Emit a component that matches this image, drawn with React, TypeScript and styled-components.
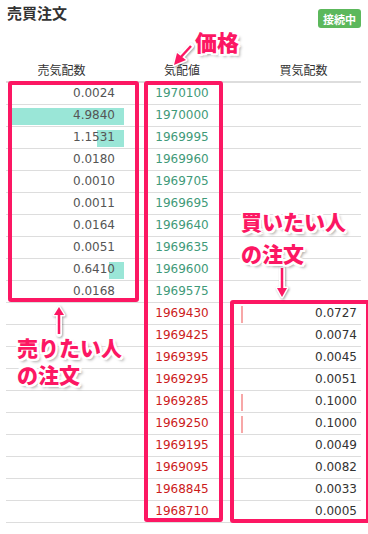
import React from "react";
import styled, { createGlobalStyle } from "styled-components";

const GlobalStyle = createGlobalStyle`
  html, body { margin: 0; padding: 0; background: #fff; }
  body { font-family: "DejaVu Sans", "Noto Sans CJK JP", sans-serif; }
  * { box-sizing: border-box; }
`;

const PINK = "#fc1763";

const Page = styled.div`
  position: relative;
  width: 368px;
  height: 534px;
  padding: 0 7px 0 6px;
  overflow: hidden;
`;

const TopBar = styled.div`
  display: flex;
  justify-content: space-between;
  align-items: flex-start;
  height: 26px;
`;

const Title = styled.h1`
  margin: 0;
  padding-left: 1px;
  font-family: "Noto Sans CJK JP", sans-serif;
  font-size: 15px;
  font-weight: 700;
  line-height: 26px;
  color: #333;
`;

const Badge = styled.span`
  margin-top: 9px;
  width: 43px;
  height: 19px;
  display: flex;
  align-items: center;
  justify-content: center;
  background: #5cb85c;
  color: #fff;
  border-radius: 3px;
  font-family: "Noto Sans CJK JP", sans-serif;
  font-size: 11px;
  font-weight: 700;
`;

const Grid = styled.div`
  display: grid;
  grid-template-columns: 122px 108px 125px;
`;

const HeadCell = styled.div<{ $pl?: number; $pr?: number }>`
  height: 57px;
  display: flex;
  align-items: flex-end;
  justify-content: center;
  padding: 0 ${(p) => p.$pr ?? 0}px 3px ${(p) => p.$pl ?? 0}px;
  border-bottom: 2px solid #ddd;
  font-family: "Noto Sans CJK JP", sans-serif;
  font-size: 12px;
  line-height: 16px;
  color: #333;
`;

const Cell = styled.div<{ $align: "left" | "center" | "right"; $color: string; $pr?: number }>`
  position: relative;
  height: 22px;
  border-bottom: 1px solid #ddd;
  display: flex;
  align-items: center;
  justify-content: ${(p) =>
    p.$align === "right" ? "flex-end" : p.$align === "center" ? "center" : "flex-start"};
  padding-right: ${(p) => p.$pr ?? 0}px;
  font-size: 12px;
  line-height: 21px;
  color: ${(p) => p.$color};
`;

const Value = styled.span`
  position: relative;
  z-index: 1;
`;

const SellBar = styled.div`
  position: absolute;
  right: 4px;
  top: 3px;
  height: 17px;
  background: #9ae6d7;
`;

const BuyBar = styled.div`
  position: absolute;
  left: 5px;
  top: 3px;
  height: 17px;
  width: 2px;
  background: #f7a7a7;
`;

const Frame = styled.div<{ $l: number; $t: number; $w: number; $h: number }>`
  position: absolute;
  left: ${(p) => p.$l}px;
  top: ${(p) => p.$t}px;
  width: ${(p) => p.$w}px;
  height: ${(p) => p.$h}px;
  border: 4px solid ${PINK};
  border-radius: 3px;
  pointer-events: none;
`;

const Note = styled.div<{ $l: number; $t: number; $lh: number; $fs: number }>`
  position: absolute;
  left: ${(p) => p.$l}px;
  top: ${(p) => p.$t}px;
  font-family: "Noto Sans CJK JP", sans-serif;
  font-weight: 900;
  font-size: ${(p) => p.$fs}px;
  line-height: ${(p) => p.$lh}px;
  color: ${PINK};
  white-space: pre;
  text-shadow: 2px 0 0 #fff, -2px 0 0 #fff, 0 2px 0 #fff, 0 -2px 0 #fff,
    2px 2px 0 #fff, -2px -2px 0 #fff, 2px -2px 0 #fff, -2px 2px 0 #fff,
    3px 3px 3px rgba(0, 0, 0, 0.35);
`;

const Arrows = styled.svg`
  position: absolute;
  left: 0;
  top: 0;
  pointer-events: none;
  filter: drop-shadow(1px 1px 1px rgba(0, 0, 0, 0.35));
`;

const sell: (string | null)[] = [
  "0.0024", "4.9840", "1.1531", "0.0180", "0.0010",
  "0.0011", "0.0164", "0.0051", "0.6410", "0.0168",
];
const sellBars: Record<number, number> = { 1: 112, 2: 27, 8: 15 };
const prices = [
  "1970100", "1970000", "1969995", "1969960", "1969705",
  "1969695", "1969640", "1969635", "1969600", "1969575",
  "1969430", "1969425", "1969395", "1969295", "1969285",
  "1969250", "1969195", "1969095", "1968845", "1968710",
];
const buy = [
  "0.0727", "0.0074", "0.0045", "0.0051", "0.1000",
  "0.1000", "0.0049", "0.0082", "0.0033", "0.0005",
];
const buyBars = new Set([0, 4, 5]);

function Arrow({ d, head }: { d: string; head: string }) {
  return (
    <g>
      <path d={d} stroke="#fff" strokeWidth={6} fill="none" strokeLinecap="round" />
      <polygon points={head} fill="#fff" stroke="#fff" strokeWidth={3} strokeLinejoin="round" />
      <path d={d} stroke={PINK} strokeWidth={2.5} fill="none" />
      <polygon points={head} fill={PINK} />
    </g>
  );
}

export default function App() {
  return (
    <>
      <GlobalStyle />
      <Page>
        <TopBar>
          <Title>売買注文</Title>
          <Badge>接続中</Badge>
        </TopBar>
        <Grid>
          <HeadCell $pr={11}>売気配数</HeadCell>
          <HeadCell>気配値</HeadCell>
          <HeadCell $pl={10}>買気配数</HeadCell>
          {prices.map((p, i) => {
            const s = i < 10 ? sell[i] : null;
            const b = i >= 10 ? buy[i - 10] : null;
            return (
              <React.Fragment key={p}>
                <Cell $align="right" $color="#555" $pr={13}>
                  {i in sellBars && <SellBar style={{ width: sellBars[i] }} />}
                  {s && <Value>{s}</Value>}
                </Cell>
                <Cell $align="center" $color={i < 10 ? "#3f9a79" : "#cc1b1b"}>
                  <Value>{p}</Value>
                </Cell>
                <Cell $align="right" $color="#333" $pr={4}>
                  {b !== null && buyBars.has(i - 10) && <BuyBar />}
                  {b && <Value>{b}</Value>}
                </Cell>
              </React.Fragment>
            );
          })}
        </Grid>

        <Frame $l={8} $t={81} $w={131} $h={221} />
        <Frame $l={144} $t={81} $w={79} $h={441} />
        <Frame $l={230} $t={300} $w={140} $h={223} />

        <Arrows width={368} height={534}>
          <Arrow d="M191 46 L180 58" head="174,65 177,53 186,60" />
          <Arrow d="M59 334 L59 313" head="59,307 54,315 64,315" />
          <Arrow d="M282 268 L282 290" head="282,297 277,288 287,288" />
        </Arrows>

        <Note $l={195} $t={27} $lh={28} $fs={22}>価格</Note>
        <Note $l={241} $t={205} $lh={32} $fs={21}>{"買いたい人\nの注文"}</Note>
        <Note $l={17} $t={334} $lh={27} $fs={21}>{"売りたい人\nの注文"}</Note>
      </Page>
    </>
  );
}
